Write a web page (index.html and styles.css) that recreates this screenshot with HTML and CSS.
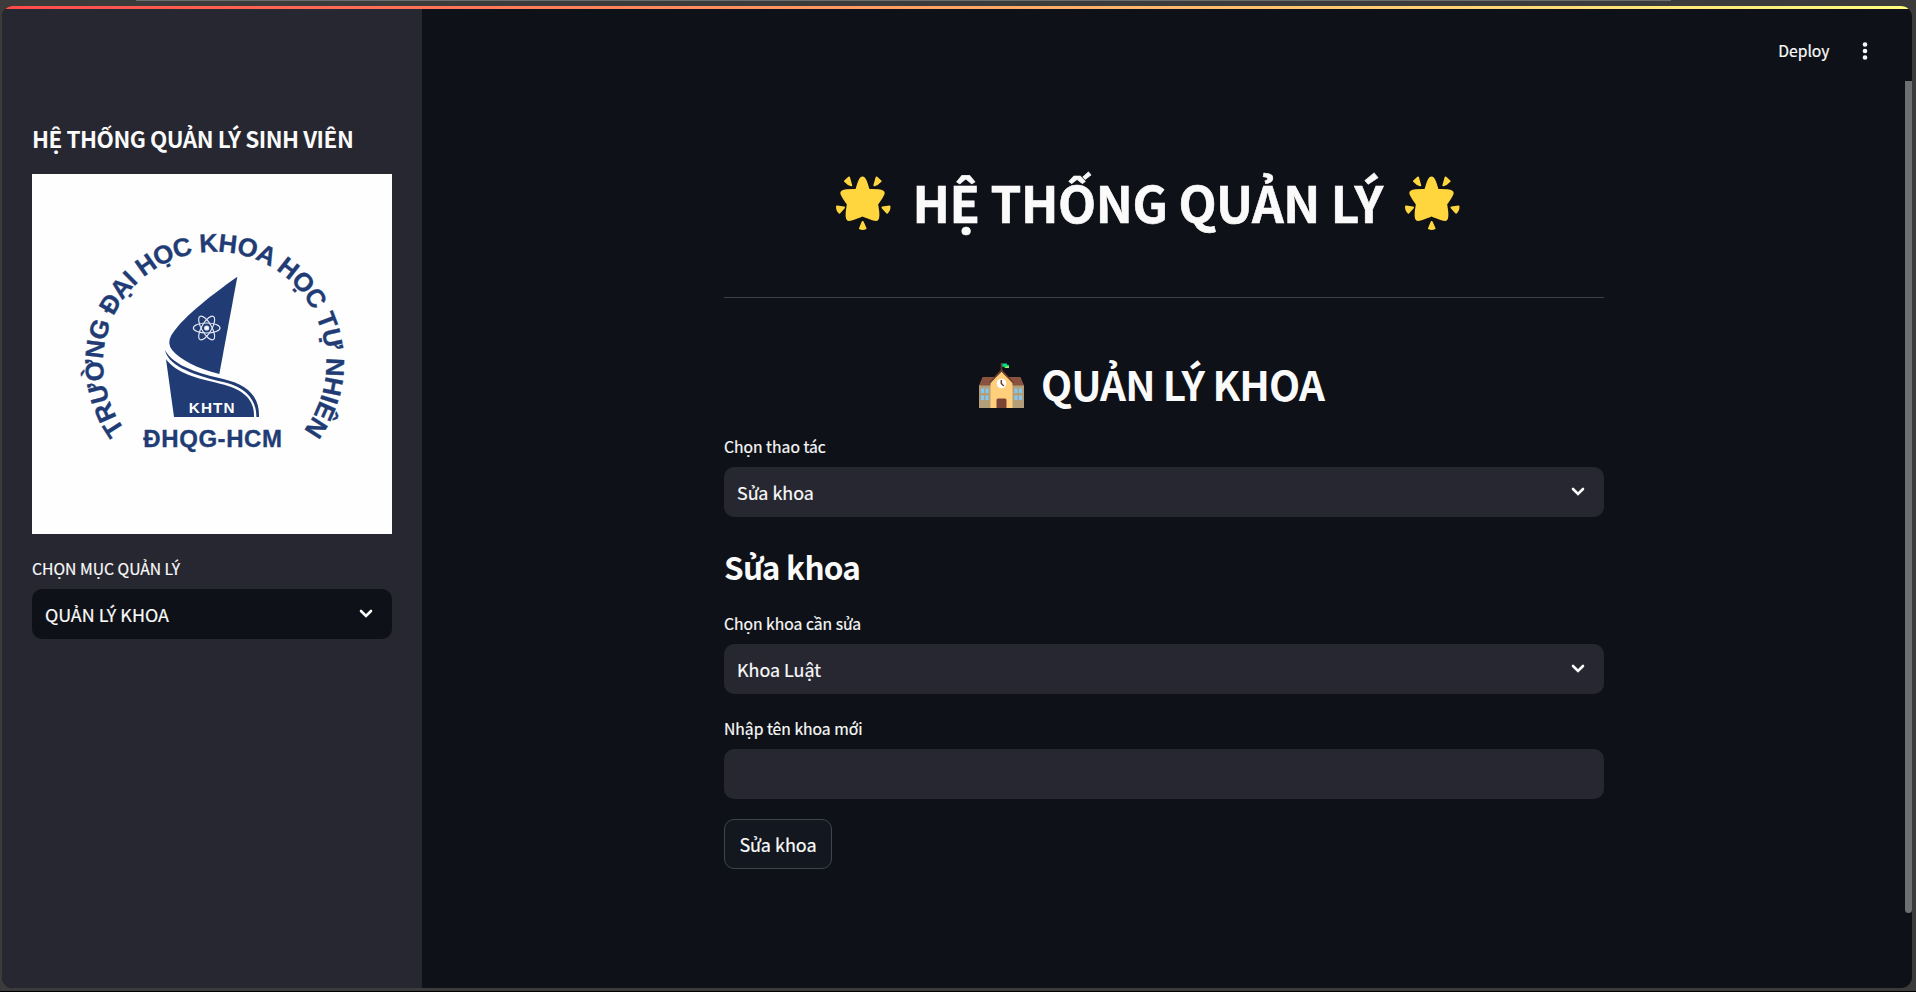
FILE: index.html
```html
<!DOCTYPE html>
<html lang="vi">
<head>
<meta charset="utf-8">
<title>Hệ thống quản lý sinh viên</title>
<link rel="stylesheet" href="styles.css">
</head>
<body>
<svg class="defs" width="0" height="0" aria-hidden="true">
  <symbol id="star" viewBox="0 0 55 54">
    <g fill="#ffd63d" stroke="#ffd63d" stroke-linejoin="round">
      <path stroke-width="5" d="M26.5 3C28.4 3 31 14.8 31.8 15.2C32.8 15.7 46 14.8 46.2 17C46.4 19 39.7 27.1 39.6 28C39.5 29 42.5 41 40.3 42.5C38.8 43.5 28 37.9 26.5 37.9C25 37.9 14.2 43.5 12.7 42.5C10.5 41 13.5 29 13.4 28C13.3 27.1 6.6 19 6.8 17C7 14.8 20.2 15.7 21.2 15.2C22 14.8 24.6 3 26.5 3Z"/>
      <path stroke-width="2" d="M9 5.2L13 1.5L15.2 9.3Q12 8.6 9 5.2ZM44.6 5.2L40.6 1.5L38.4 9.3Q41.6 8.6 44.6 5.2ZM1 30.5L8 31.5L3.5 36.7Q1 34.5 1 30.5ZM53.5 30.5L46.5 31.5L51 36.7Q53.5 34.5 53.5 30.5ZM26.7 46L24 52.3Q26.7 53.5 29.5 52.3Z"/>
    </g>
  </symbol>
  <symbol id="chevron" viewBox="0 0 14 10">
    <path d="M2 2L7 7L12 2" fill="none" stroke="#fafafa" stroke-width="2.6" stroke-linecap="round"/>
  </symbol>
</svg>
<div class="frame">
  <div class="decoration"></div>
  <aside class="sidebar">
    <h3 class="side-title"><span>HỆ THỐNG QUẢN LÝ SINH VIÊN</span></h3>
    <svg class="logo" viewBox="6 12 1080 1080">
      <rect x="6" y="12" width="1080" height="1080" fill="#fefefe"/>
      <path id="ring" d="M286 780A334.500 334.500 0 1 1 790 817" fill="none"/>
      <g fill="#213c74" font-family="Liberation Sans, sans-serif" font-weight="700">
        <text font-size="77" textLength="1482" stroke="#213c74" stroke-width="1"><textPath href="#ring">TRƯỜNG ĐẠI HỌC KHOA HỌC TỰ NHIÊN</textPath></text>
        <text x="340" y="830" font-size="72" textLength="416" stroke="#213c74" stroke-width="1">ĐHQG-HCM</text>
        <path d="M622 320L568 612C500 596 450 568 427 541Q410 521 424 496C450 450 530 385 622 320Z"/>
        <path d="M405 540C430 590 515 612 580 627C655 645 689 680 687 741H679C680 690 648 652 580 636C505 619 415 592 405 540Z"/>
        <path d="M408 568C440 610 500 625 570 641C640 656 675 690 672 741H432Z"/>
        <text x="476" y="728" font-size="46" textLength="138" fill="#fefefe">KHTN</text>
      </g>
      <g fill="none" stroke="#e4e8f2" stroke-width="3.500">
        <ellipse cx="530" cy="474" rx="40" ry="15"/>
        <ellipse cx="530" cy="474" rx="40" ry="15" transform="rotate(60 530 474)"/>
        <ellipse cx="530" cy="474" rx="40" ry="15" transform="rotate(120 530 474)"/>
        <circle cx="530" cy="474" r="6" fill="#fff"/>
      </g>
    </svg>
    <div class="label side-label"><span>CHỌN MỤC QUẢN LÝ</span></div>
    <div class="field field-dark"><span>QUẢN LÝ KHOA</span><svg class="chev"><use href="#chevron"/></svg></div>
  </aside>
  <main class="main">
    <header class="toolbar">
      <span class="deploy">Deploy</span>
      <svg class="dots" viewBox="0 0 6 20"><g fill="#fafafa"><circle cx="3" cy="3.500" r="2.300"/><circle cx="3" cy="10" r="2.300"/><circle cx="3" cy="16.500" r="2.300"/></g></svg>
    </header>
    <div class="content">
      <h1 class="title"><svg class="star"><use href="#star"/></svg><span>HỆ THỐNG QUẢN LÝ</span><svg class="star"><use href="#star"/></svg></h1>
      <hr class="rule">
      <h2 class="subtitle">
        <svg class="school" viewBox="0 0 45 45">
          <path d="M0 22H45V45H0Z" fill="#b39e7a"/>
          <path d="M3.500 14H41.500L45 22.500H0Z" fill="#8a5340"/>
          <path d="M22.500 8.500L11.500 19V45H33.500V19Z" fill="#ffcf7c"/>
          <path d="M10.500 20L22.500 7.500L34.500 20" fill="none" stroke="#70402f" stroke-width="1.800"/>
          <path d="M22.500 0V8" stroke="#70402f" stroke-width="1.500"/>
          <path d="M23.300 .5H28V2H30V5H25.500V3.800H23.300Z" fill="#00e08a"/>
          <path d="M26.500 3.500H30V5H26.500Z" fill="#b5ee45"/>
          <circle cx="22.500" cy="20.500" r="4.800" fill="#fff"/>
          <path d="M22.300 17V20.500L24.800 23" fill="none" stroke="#70402f" stroke-width="1.500"/>
          <path d="M17.500 45V37Q17.500 35.500 19 35.500H26Q27.500 35.500 27.500 37V45Z" fill="#7c4434"/>
          <path d="M2 25.500H5V30H2ZM6.500 25.500H9.500V30H6.500ZM2 32.500H5V37H2ZM6.500 32.500H9.500V37H6.500ZM35.500 25.500H38.500V30H35.500ZM40 25.500H43V30H40ZM35.500 32.500H38.500V37H35.500ZM40 32.500H43V37H40Z" fill="#82c8f7"/>
        </svg>
        <span>QUẢN LÝ KHOA</span>
      </h2>
      <div class="label"><span>Chọn thao tác</span></div>
      <div class="field"><span>Sửa khoa</span><svg class="chev"><use href="#chevron"/></svg></div>
      <h3 class="section"><span>Sửa khoa</span></h3>
      <div class="label"><span>Chọn khoa cần sửa</span></div>
      <div class="field"><span>Khoa Luật</span><svg class="chev"><use href="#chevron"/></svg></div>
      <div class="label label-next"><span>Nhập tên khoa mới</span></div>
      <div class="field"></div>
      <button class="button" type="button">Sửa khoa</button>
    </div>
    <div class="scrollbar"></div>
  </main>
</div>
</body>
</html>
```
FILE: styles.css
```css
* { box-sizing: border-box; }
html, body { height: 100%; }
body {
  margin: 0;
  padding: 6px 4px 4px 2px;
  background: linear-gradient(#6c6d6d, #6c6d6d) 136px 0 / 1535px 1px no-repeat, #3b3b3b;
  border-bottom: 1px solid #000;
  overflow: hidden;
  color: #fafafa;
  font-family: "Noto Sans CJK SC", "Noto Sans", sans-serif;
}
h1, h2, h3 { margin: 0; font-weight: 700; white-space: nowrap; }
.defs { position: absolute; }
.frame {
  position: relative;
  display: flex;
  height: 982px;
  border-radius: 11px;
  overflow: hidden;
  background: #0e1117;
}
.decoration {
  position: absolute;
  inset: 0 0 auto;
  height: 3px;
  background: linear-gradient(90deg, #ff4b4b, #fffd80);
}
.sidebar {
  width: 420px;
  padding: 117px 30px 0;
  background: #262730;
}
.side-title { font-size: 22.5px; line-height: 30px; letter-spacing: -.5px; }
.logo { display: block; width: 360px; height: 360px; margin-top: 21px; }
.label { margin-top: 25px; margin-bottom: 8px; font-size: 15.7px; line-height: 24px; -webkit-text-stroke: .2px; }
.side-label, .label-next { margin-top: 23px; }
.field {
  display: flex;
  align-items: center;
  justify-content: space-between;
  height: 50px;
  padding: 0 19px 0 13px;
  border-radius: 10px;
  background: #262730;
  font-size: 17.9px;
  line-height: 30px;
  -webkit-text-stroke: .2px;
}
.field-dark { background: #0e1117; }
.chev { width: 14px; height: 10px; }
.main { position: relative; flex: 1; }
.toolbar {
  display: flex;
  align-items: center;
  justify-content: flex-end;
  gap: 32px;
  height: 75px;
  padding: 15px 44.5px 0 0;
  font-size: 15.7px;
  line-height: 24px;
  -webkit-text-stroke: .2px;
}
.dots { width: 6px; height: 20px; }
.content { width: 880px; margin: 87px 0 0 302px; }
.title { display: flex; gap: 22px; padding-left: 111.5px; font-size: 49.5px; line-height: 66px; letter-spacing: -.4px; }
.title span { padding-top: 1px; -webkit-text-stroke: .6px; }
.star { width: 55px; height: 54px; margin-top: 8px; }
.rule { height: 1px; margin: 62px 0 58px; border: 0; background: #3d4045; }
.subtitle { display: flex; gap: 17px; height: 54px; padding-left: 255px; font-size: 40.5px; line-height: 54px; letter-spacing: -.9px; }
.subtitle span { padding-top: 1px; }
.school { width: 45px; height: 45px; margin-top: 7px; }
.section { margin-top: 28px; font-size: 31.5px; line-height: 42px; letter-spacing: -.75px; }
.button {
  display: block;
  width: 108px;
  height: 50px;
  margin-top: 20px;
  padding: 0;
  border: 1px solid #41444c;
  border-radius: 10px;
  background: #131720;
  color: inherit;
  font: 18px/30px "Noto Sans CJK SC", "Noto Sans", sans-serif;
  -webkit-text-stroke: .2px;
}
.scrollbar {
  position: absolute;
  top: 75px;
  right: 0;
  width: 7px;
  height: 832px;
  border-radius: 0 0 4px 4px;
  background: #6e6f73;
}
```
